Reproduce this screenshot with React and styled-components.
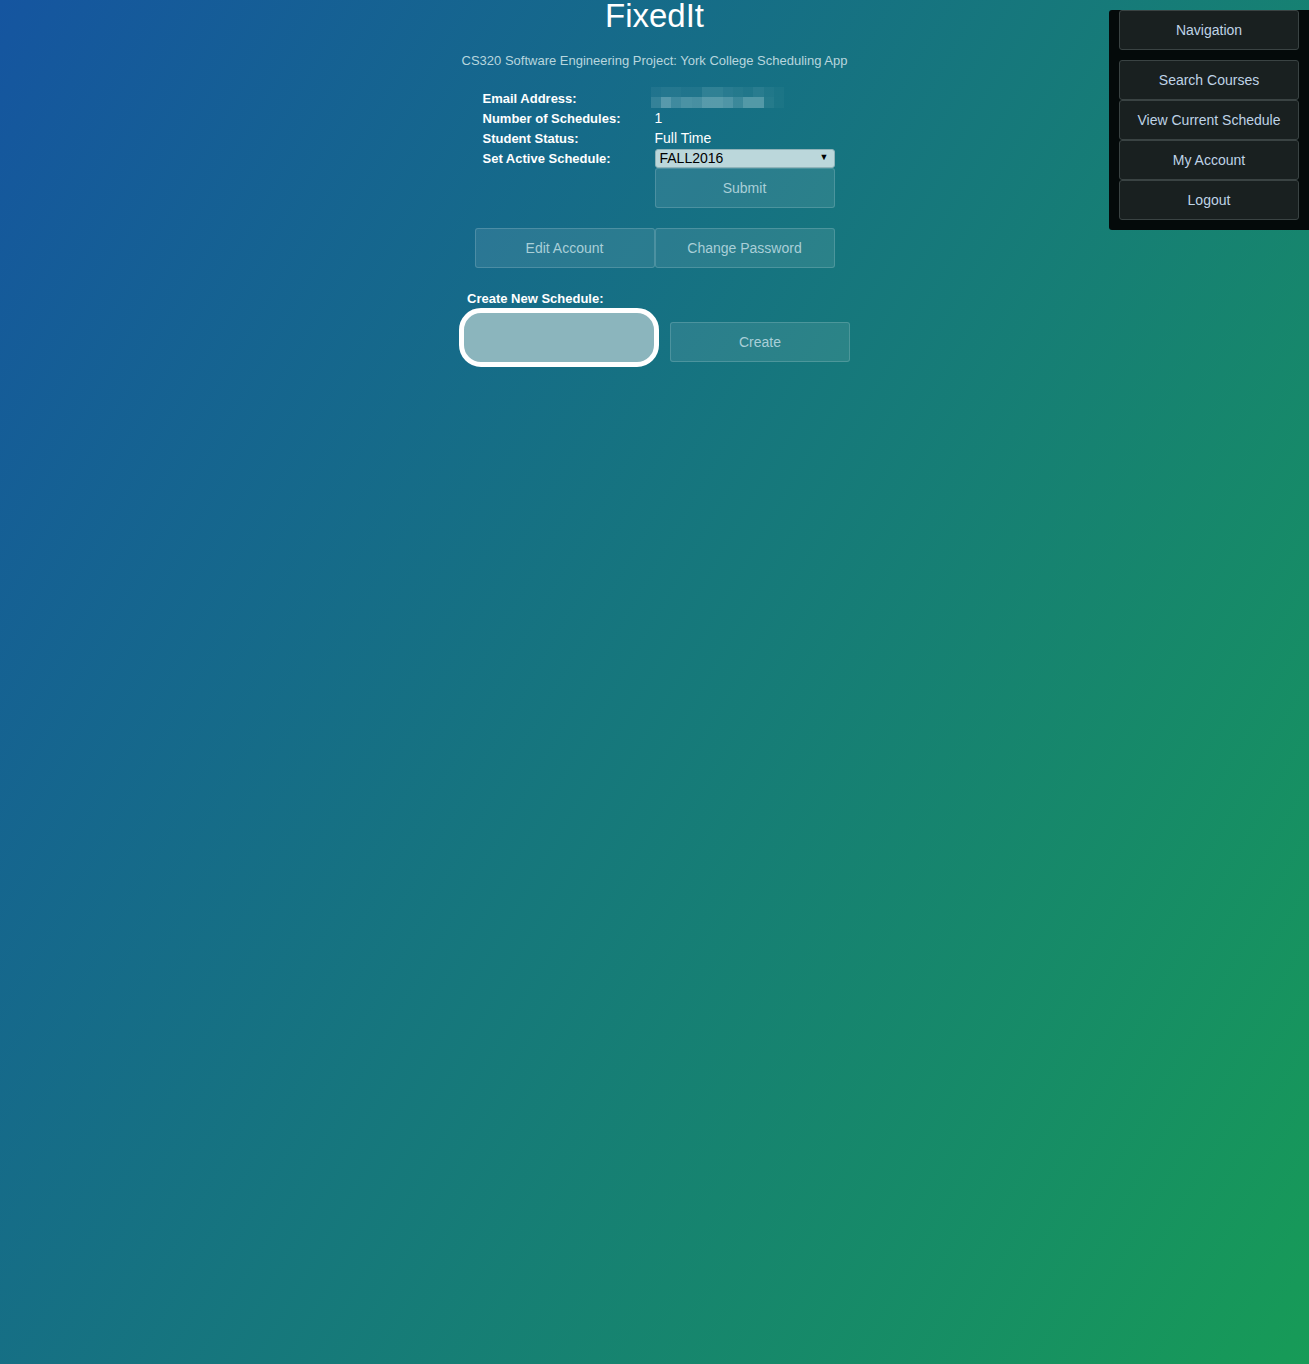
import React from "react";
import styled, { createGlobalStyle } from "styled-components";

const GlobalStyle = createGlobalStyle`
  html, body {
    margin: 0;
    padding: 0;
    min-height: 100%;
  }
  body {
    min-height: 1364px;
    background: linear-gradient(120deg, #1555a0 0%, #179b57 100%);
    font-family: "Liberation Sans", Arial, sans-serif;
    color: #fff;
  }
`;

// blurred email, rendered as a pixel mosaic
const mosaic = [
  [0.06, 0.08, 0.08, 0.06, 0.06, 0.14, 0.14, 0.1, 0.08, 0.06, 0.1, 0.06, 0.03],
  [0.16, 0.34, 0.22, 0.28, 0.26, 0.34, 0.34, 0.3, 0.2, 0.32, 0.32, 0.08, 0.03],
];

const App = () => {
  return (
    <>
      <GlobalStyle />
      <Page>
        <Main>
          <Title>FixedIt</Title>
          <Subtitle>
            CS320 Software Engineering Project: York College Scheduling App
          </Subtitle>

          <InfoGrid>
            <Label>Email Address:</Label>
            <Value>
              <Mosaic>
                {mosaic.flat().map((a, i) => (
                  <Tile key={i} style={{ opacity: a }} />
                ))}
              </Mosaic>
            </Value>
            <Label>Number of Schedules:</Label>
            <Value>1</Value>
            <Label>Student Status:</Label>
            <Value>Full Time</Value>
            <Label>Set Active Schedule:</Label>
            <Value>
              <SelectWrap>
                <Select defaultValue="FALL2016">
                  <option>FALL2016</option>
                </Select>
                <Arrow>▼</Arrow>
              </SelectWrap>
            </Value>
            <span />
            <Button>Submit</Button>
          </InfoGrid>

          <ButtonRow>
            <Button>Edit Account</Button>
            <Button>Change Password</Button>
          </ButtonRow>

          <CreateBlock>
            <CreateLabel>Create New Schedule:</CreateLabel>
            <CreateRow>
              <NameInput />
              <Button>Create</Button>
            </CreateRow>
          </CreateBlock>
        </Main>

        <Nav>
          <NavButton>Navigation</NavButton>
          <NavList>
            <NavButton>Search Courses</NavButton>
            <NavButton>View Current Schedule</NavButton>
            <NavButton>My Account</NavButton>
            <NavButton>Logout</NavButton>
          </NavList>
        </Nav>
      </Page>
    </>
  );
};

export default App;

const Page = styled.div`
  position: relative;
  min-height: 1364px;
`;

const Main = styled.main`
  display: flex;
  flex-direction: column;
  align-items: center;
`;

const Title = styled.h1`
  margin: -4px 0 0;
  font-size: 33px;
  font-weight: normal;
  line-height: 40px;
  color: #fff;
`;

const Subtitle = styled.p`
  margin: 16px 0 0;
  font-size: 13px;
  line-height: 18px;
  color: #b8d6de;
`;

const InfoGrid = styled.div`
  margin-top: 18px;
  display: grid;
  grid-template-columns: 180px 180px;
  grid-template-rows: repeat(4, 20px) 40px;
  align-items: center;
`;

const Label = styled.div`
  padding-left: 8px;
  font-size: 13px;
  font-weight: bold;
  color: #fff;
`;

const Value = styled.div`
  font-size: 14px;
  color: #fff;
`;

const Mosaic = styled.div`
  display: grid;
  grid-template-columns: repeat(13, 10.3px);
  grid-auto-rows: 10.5px;
  margin-left: -4px;
  margin-top: -2px;
`;

const Tile = styled.div`
  background: #d8f0f4;
`;

const SelectWrap = styled.div`
  position: relative;
  height: 19px;
`;

const Select = styled.select`
  appearance: none;
  width: 180px;
  height: 19px;
  margin: 0;
  padding: 0 0 0 4px;
  border: 1px solid #8fb3b9;
  border-radius: 3px;
  background: #bbd7db;
  font-family: "Liberation Sans", Arial, sans-serif;
  font-size: 14px;
  color: #000;
`;

const Arrow = styled.span`
  position: absolute;
  right: 6px;
  top: 3px;
  font-size: 9px;
  color: #000;
  pointer-events: none;
`;

const Button = styled.button`
  width: 180px;
  height: 40px;
  padding: 0;
  border: 1px solid rgba(255, 255, 255, 0.16);
  border-radius: 3px;
  background: rgba(255, 255, 255, 0.09);
  font-family: "Liberation Sans", Arial, sans-serif;
  font-size: 14px;
  color: #a9cfd8;
  cursor: pointer;
`;

const ButtonRow = styled.div`
  margin-top: 20px;
  display: flex;
`;

const CreateBlock = styled.div`
  margin-top: 23px;
  display: flex;
  flex-direction: column;
  width: 391px;
`;

const CreateLabel = styled.div`
  padding-left: 8px;
  font-size: 13px;
  font-weight: bold;
  color: #fff;
  line-height: 15px;
`;

const CreateRow = styled.div`
  margin-top: 2px;
  display: flex;
  align-items: flex-start;
  gap: 11px;

  & > button {
    margin-top: 14px;
  }
`;

const NameInput = styled.input`
  box-sizing: border-box;
  width: 200px;
  height: 59px;
  border: 5px solid #fff;
  border-radius: 22px;
  background: #8bb5bd;
  outline: none;
`;

const Nav = styled.nav`
  position: absolute;
  top: 10px;
  right: 0;
  width: 180px;
  padding: 0 10px 10px;
  background: #040a0a;
  border-radius: 3px 0 0 3px;
  display: flex;
  flex-direction: column;
  gap: 10px;
`;

const NavList = styled.div`
  display: flex;
  flex-direction: column;
`;

const NavButton = styled.button`
  width: 180px;
  height: 40px;
  padding: 0;
  border: 1px solid #3a4343;
  border-radius: 3px;
  background: #192020;
  font-family: "Liberation Sans", Arial, sans-serif;
  font-size: 14px;
  color: #bfd3e6;
  cursor: pointer;
`;
